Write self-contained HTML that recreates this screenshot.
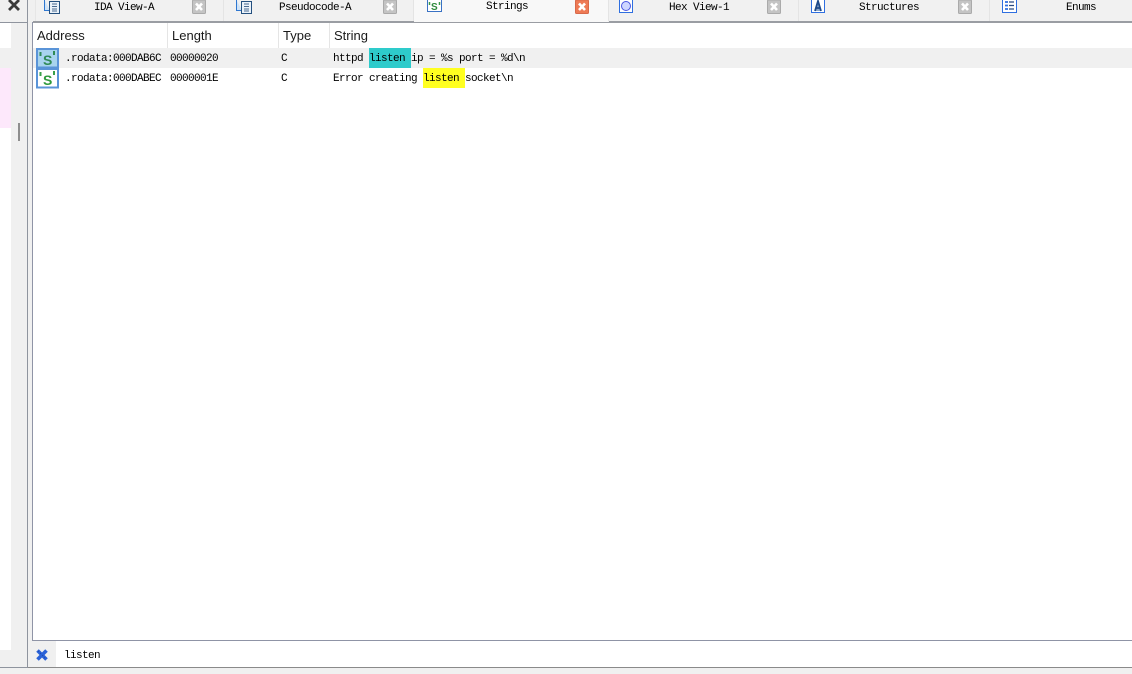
<!DOCTYPE html>
<html><head><meta charset="utf-8">
<style>
html,body{margin:0;padding:0;background:#f0f0f0;width:1132px;height:674px;overflow:hidden}
body{position:relative;font-family:"Liberation Mono",monospace}
.a{position:absolute}
.m{position:absolute;font:11px/14px "Liberation Mono",monospace;letter-spacing:-.6px;color:#000;white-space:pre}
.h{position:absolute;font:13px/16px "Liberation Sans",sans-serif;color:#1a1a1a;white-space:pre}
.sep{position:absolute;top:0;width:1px;height:21px;background:#e4e4e4}
svg{position:absolute;overflow:visible}
</style></head>
<body>
<!-- left pane -->
<div class="a" style="left:0;top:23px;width:11px;height:627px;background:#fff"></div>
<div class="a" style="left:0;top:48px;width:11px;height:20px;background:#f0f0f0"></div>
<div class="a" style="left:0;top:68px;width:11px;height:60px;background:#fde8fb"></div>
<div class="a" style="left:18px;top:123px;width:2px;height:18px;background:#8e8e8e"></div>
<div class="a" style="left:0;top:22px;width:28px;height:1px;background:#8f949e"></div>
<div class="a" style="left:27px;top:0;width:1px;height:668px;background:#8f949e"></div>
<div class="a" style="left:0;top:667px;width:28px;height:1px;background:#8f949e"></div>
<svg style="left:8px;top:0" width="13" height="12"><path d="M1 0L11 10M11 0L1 10" stroke="#3a3a3a" stroke-width="2.800" fill="none"/></svg>

<!-- tab bar -->
<div class="a" style="left:35px;top:0;width:1097px;height:21px;background:#f1f1f1"></div>
<div class="a" style="left:35px;top:0;width:1px;height:21px;background:#e6e6e6"></div>
<div class="sep" style="left:223px"></div>
<div class="sep" style="left:413px"></div>
<div class="sep" style="left:608px"></div>
<div class="sep" style="left:798px"></div>
<div class="sep" style="left:989px"></div>
<div class="a" style="left:414px;top:0;width:194px;height:22px;background:#f8f8f8"></div>
<div class="a" style="left:33px;top:21px;width:381px;height:2px;background:#9a9da3"></div>
<div class="a" style="left:609px;top:21px;width:523px;height:2px;background:#9a9da3"></div>
<div class="a" style="left:414px;top:22px;width:195px;height:1px;background:#c8c8c8"></div>

<svg style="left:44px;top:0" width="16" height="14"><path d="M.5 0V10.500H6" stroke="#2f77d0" fill="#cfe3f7"/><rect x="5.500" y="1.500" width="10" height="12" fill="#eaf2fa" stroke="#24507f"/><path d="M8 4H13M8 6.500H13M8 9H13M8 11H13" stroke="#4a6a90"/></svg>
<svg style="left:236px;top:0" width="16" height="14"><path d="M.5 0V10.500H6" stroke="#2f77d0" fill="#cfe3f7"/><rect x="5.500" y="1.500" width="10" height="12" fill="#eaf2fa" stroke="#24507f"/><path d="M8 4H13M8 6.500H13M8 9H13M8 11H13" stroke="#4a6a90"/></svg>
<svg style="left:427px;top:0" width="15" height="12"><rect x=".5" y="-1" width="14" height="12.500" fill="#fff" stroke="#3a72c4"/><text x="4" y="10" font-family="Liberation Sans" font-size="10" font-weight="700" fill="#2f8a3c">S</text><path d="M2.500 2V5M12.500 2V5" stroke="#3d9a4a" stroke-width="1.500"/></svg>
<svg style="left:619px;top:0" width="15" height="13"><rect x=".5" y="-1" width="13" height="13.500" fill="#fff" stroke="#2f6fe0"/><circle cx="7" cy="6" r="4.500" fill="#cfd6ff" stroke="#4a55e0"/></svg>
<svg style="left:811px;top:0" width="15" height="13"><rect x=".5" y="-1" width="13" height="13.500" fill="#fff" stroke="#2f6fe0"/><path d="M4 11L7 1L10 11M5 8H9" stroke="#1e4a8a" stroke-width="1.800" fill="#8fa8c8"/></svg>
<svg style="left:1002px;top:0" width="16" height="13"><rect x=".5" y="-1" width="14" height="13.500" fill="#fff" stroke="#2f6fe0"/><path d="M3 2H6M3 5.500H6M3 9H6" stroke="#2f6fe0" stroke-width="1.800"/><path d="M7 2H12M7 5.500H12M7 9H12" stroke="#2a4a80" stroke-width="1.200"/></svg>

<div class="m" style="left:94px;top:1px">IDA View-A</div>
<div class="m" style="left:279px;top:1px">Pseudocode-A</div>
<div class="m" style="left:486px;top:0">Strings</div>
<div class="m" style="left:669px;top:1px">Hex View-1</div>
<div class="m" style="left:859px;top:1px">Structures</div>
<div class="m" style="left:1066px;top:1px">Enums</div>

<svg style="left:192px;top:0" width="14" height="14"><rect x=".5" y="0" width="13" height="13.500" rx="1" fill="#c4c4c4" stroke="#aaa"/><path d="M4 3.500L10 10M10 3.500L4 10" stroke="#fff" stroke-width="2.600"/></svg>
<svg style="left:383px;top:0" width="14" height="14"><rect x=".5" y="0" width="13" height="13.500" rx="1" fill="#c4c4c4" stroke="#aaa"/><path d="M4 3.500L10 10M10 3.500L4 10" stroke="#fff" stroke-width="2.600"/></svg>
<svg style="left:575px;top:0" width="14" height="14"><rect x=".5" y="0" width="13" height="13.500" rx="1" fill="#ee7a55" stroke="#d8694a"/><path d="M4 3.500L10 10M10 3.500L4 10" stroke="#fff" stroke-width="2.600"/></svg>
<svg style="left:767px;top:0" width="14" height="14"><rect x=".5" y="0" width="13" height="13.500" rx="1" fill="#c4c4c4" stroke="#aaa"/><path d="M4 3.500L10 10M10 3.500L4 10" stroke="#fff" stroke-width="2.600"/></svg>
<svg style="left:958px;top:0" width="14" height="14"><rect x=".5" y="0" width="13" height="13.500" rx="1" fill="#c4c4c4" stroke="#aaa"/><path d="M4 3.500L10 10M10 3.500L4 10" stroke="#fff" stroke-width="2.600"/></svg>

<!-- main pane -->
<div class="a" style="left:32px;top:22px;width:1100px;height:619px;background:#fff"></div>
<div class="a" style="left:32px;top:22px;width:1100px;height:1px;background:#9a9da3"></div>
<div class="a" style="left:32px;top:22px;width:1px;height:619px;background:#8f94a6"></div>
<div class="a" style="left:32px;top:640px;width:1100px;height:1px;background:#8f94a6"></div>

<!-- header -->
<div class="a" style="left:167px;top:23px;width:1px;height:25px;background:#e5e5e5"></div>
<div class="a" style="left:278px;top:23px;width:1px;height:25px;background:#e5e5e5"></div>
<div class="a" style="left:329px;top:23px;width:1px;height:25px;background:#e5e5e5"></div>
<div class="h" style="left:37px;top:28px">Address</div>
<div class="h" style="left:172px;top:28px">Length</div>
<div class="h" style="left:283px;top:28px">Type</div>
<div class="h" style="left:334px;top:28px">String</div>

<!-- rows -->
<div class="a" style="left:33px;top:48px;width:1099px;height:20px;background:#f0f0f0"></div>
<div class="a" style="left:369px;top:48px;width:42px;height:20px;background:#2ecbcb"></div>
<div class="a" style="left:423px;top:68px;width:42px;height:20px;background:#ffff20"></div>

<svg style="left:36px;top:48px" width="23" height="20"><rect x="1" y="1" width="21" height="18.500" fill="#a8d4ee" stroke="#5a94d8" stroke-width="2"/><text x="7" y="17" font-family="Liberation Sans" font-size="14" font-weight="700" fill="#2f8a55">S</text><path d="M4.500 4V8M18 3V7" stroke="#2f8a55" stroke-width="2"/></svg>
<svg style="left:36px;top:68px" width="23" height="20"><rect x="1" y="1" width="21" height="18.500" fill="#fff" stroke="#5a94d8" stroke-width="2"/><text x="7" y="17" font-family="Liberation Sans" font-size="14" font-weight="700" fill="#2f9a3c">S</text><path d="M4.500 4V8M18 3V7" stroke="#3aa048" stroke-width="2"/></svg>

<div class="m" style="left:65px;top:52px">.rodata:000DAB6C</div>
<div class="m" style="left:170px;top:52px">00000020</div>
<div class="m" style="left:281px;top:52px">C</div>
<div class="m" style="left:333px;top:52px">httpd listen ip = %s port = %d\n</div>
<div class="m" style="left:65px;top:72px">.rodata:000DABEC</div>
<div class="m" style="left:170px;top:72px">0000001E</div>
<div class="m" style="left:281px;top:72px">C</div>
<div class="m" style="left:333px;top:72px">Error creating listen socket\n</div>

<!-- filter bar -->
<div class="a" style="left:56px;top:641px;width:1076px;height:26px;background:#fff"></div>
<div class="a" style="left:28px;top:667px;width:1104px;height:1px;background:#8a8a8a"></div>
<svg style="left:36px;top:649px" width="12" height="12"><path d="M1.500 1.500L10.500 10.500M10.500 1.500L1.500 10.500" stroke="#2b62d8" stroke-width="3.600"/><path d="M2 2L10 10" stroke="#1d4aa8" stroke-width="1" stroke-dasharray="1 2"/></svg>
<div class="m" style="left:64px;top:649px">listen</div>
</body></html>
